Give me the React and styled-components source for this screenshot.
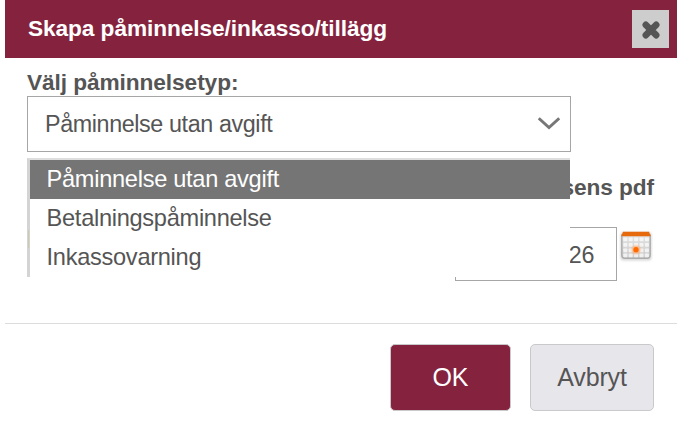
import React, { useState } from 'react';
import styled, { createGlobalStyle } from 'styled-components';

const GlobalStyle = createGlobalStyle`
  body {
    margin: 0;
    background: #fff;
    overflow: hidden;
    font-family: "Liberation Sans", Arial, sans-serif;
    font-size: 23.3px;
    color: #555;
  }
  * { box-sizing: border-box; }
`

const Dialog = styled.div`
  width: 672px;
  height: 430px;
  margin-left: 5px;
  display: flex;
  flex-direction: column;
  background: #fff;
`

const Header = styled.header`
  height: 58px;
  padding: 0 8px 0 23px;
  display: flex;
  align-items: center;
  justify-content: space-between;
  background: #85233f;
  color: #fff;
`

const Title = styled.h1`
  margin: 0 0 2px;
  font-size: 22.7px;
  line-height: 26px;
  letter-spacing: -0.09px;
`

const CloseButton = styled.button`
  width: 37px;
  height: 38px;
  padding: 2px 0 0 1px;
  border: none;
  display: flex;
  align-items: center;
  justify-content: center;
  background: #cdcdcd;
`

const Body = styled.main`
  height: 265px;
  padding: 11px 23px 0 22px;
`

const Label = styled.label`
  display: block;
  height: 27px;
  line-height: 26px;
  font-size: 22.7px;
  font-weight: bold;
  letter-spacing: -0.09px;
  white-space: nowrap;
`

const SelectWrapper = styled.div`
  position: relative;
  width: 544px;
`

const SelectBox = styled.div`
  height: 56px;
  padding: 0 10px 0 17px;
  display: flex;
  align-items: center;
  justify-content: space-between;
  border: 1px solid #a6a6a6;
  background: #fff;
  letter-spacing: -0.38px;
`

// opens on top of the rest of the form
const Menu = styled.ul`
  position: absolute;
  top: 62px;
  left: 0;
  width: 543px;
  margin: 0;
  padding: 0;
  list-style: none;
  border-top: 2px solid #dedede;
  border-left: 3px solid rgba(205, 205, 205, 0.85);
`

const Option = styled.li`
  height: 39px;
  padding-left: 16.6px;
  line-height: 38px;
  font-size: 23.6px;
  letter-spacing: -0.29px;
  background: ${props => props.$active ? '#757575' : '#fff'};
  color: ${props => props.$active ? '#fff' : '#555'};
`

const DateSection = styled.section`
  margin-top: 22px;
`

const DateLabel = styled(Label)`
  height: 53px;
  text-align: right;
`

const DateRow = styled.div`
  display: flex;
  align-items: flex-start;
`

const Marker = styled.span`
  width: 1px;
  height: 18px;
  margin: 3px auto 0 1px;
  background: #c9c400;
`

const DateField = styled.div`
  width: 162px;
  height: 54px;
  padding: 0 22px 0 0;
  border: 1px solid #a6a6a6;
  line-height: 54px;
  letter-spacing: -0.36px;
  text-align: right;
`

const CalendarButton = styled.button`
  width: 34px;
  height: 34px;
  margin: 2px 1px 0 2px;
  padding: 0;
  border: none;
  background: none;
`

const Footer = styled.footer`
  flex: 1;
  padding: 20px 23px 0;
  display: flex;
  justify-content: flex-end;
  align-items: flex-start;
  gap: 19px;
  border-top: 1px solid #dcdcdc;
`

const Button = styled.button`
  width: ${props => props.$primary ? '121px' : '124px'};
  height: 67px;
  padding: 0 0 1px;
  border: 1px solid #c9c9cb;
  border-radius: 5px;
  font-family: inherit;
  font-size: 25px;
  letter-spacing: -0.15px;
  background: ${props => props.$primary ? '#85233f' : '#e7e6eb'};
  color: ${props => props.$primary ? '#fff' : '#555'};
`

const CloseIcon = () => (
  <svg width="20" height="20" viewBox="0 0 20 20">
    <path d="M4.8 4.8L15.2 15.2M15.2 4.8L4.8 15.2" stroke="#555" strokeWidth="6.6" strokeLinecap="round" />
  </svg>
)

const ChevronIcon = () => (
  <svg width="22" height="14" viewBox="0 0 22 14" fill="none">
    <path d="M0.8 1.2L11 10.5L21.2 1.2" stroke="#777" strokeWidth="2.9" />
  </svg>
)

const CalendarIcon = () => (
  <svg width="34" height="34" viewBox="0 0 34 34">
    <defs>
      <filter id="soft" x="-20%" y="-20%" width="140%" height="140%">
        <feGaussianBlur stdDeviation="1" />
      </filter>
      <linearGradient id="page" x1="0" y1="0" x2="0" y2="1">
        <stop offset="0" stopColor="#e2e2e2" />
        <stop offset="1" stopColor="#cccccc" />
      </linearGradient>
    </defs>
    <rect x="1.5" y="3" width="31" height="28.5" rx="3" fill="#bbb" opacity="0.6" filter="url(#soft)" />
    <path d="M2.8 6H31.2V26Q31.2 29.2 28 29.2H6Q2.8 29.2 2.8 26Z" fill="url(#page)" stroke="#acacac" strokeWidth="1.4" />
    {[8.5, 14, 19.5, 24.5].map(y => (
      [4.3, 9.7, 15.1, 20.5, 25.9].map(x => (
        <rect key={`${x}-${y}`} x={x} y={y} width="4" height="3.8" rx="0.8" fill="#fff" opacity="0.7" />
      ))
    ))}
    <path d="M4 2.8H30L31.8 7.2H2.2Z" fill="#e66a0c" />
    <circle cx="17" cy="20.7" r="4" fill="#ffac70" filter="url(#soft)" />
    <circle cx="17" cy="20.7" r="2.6" fill="#ff6a00" />
  </svg>
)

const types = ['Påminnelse utan avgift', 'Betalningspåminnelse', 'Inkassovarning']

const App = () => {
  const [selected, setSelected] = useState(types[0])

  return (
    <>
      <GlobalStyle />
      <Dialog>
        <Header>
          <Title>Skapa påminnelse/inkasso/tillägg</Title>
          <CloseButton><CloseIcon /></CloseButton>
        </Header>
        <Body>
          <Label>Välj påminnelsetyp:</Label>
          <SelectWrapper>
            <SelectBox>
              {selected}
              <ChevronIcon />
            </SelectBox>
            <Menu>
              {types.map(type => (
                <Option key={type} $active={type === selected} onClick={() => setSelected(type)}>
                  {type}
                </Option>
              ))}
            </Menu>
          </SelectWrapper>
          <DateSection>
            <DateLabel>sens pdf</DateLabel>
            <DateRow>
              <Marker />
              <DateField>26</DateField>
              <CalendarButton><CalendarIcon /></CalendarButton>
            </DateRow>
          </DateSection>
        </Body>
        <Footer>
          <Button $primary>OK</Button>
          <Button>Avbryt</Button>
        </Footer>
      </Dialog>
    </>
  )
}

export default App;
